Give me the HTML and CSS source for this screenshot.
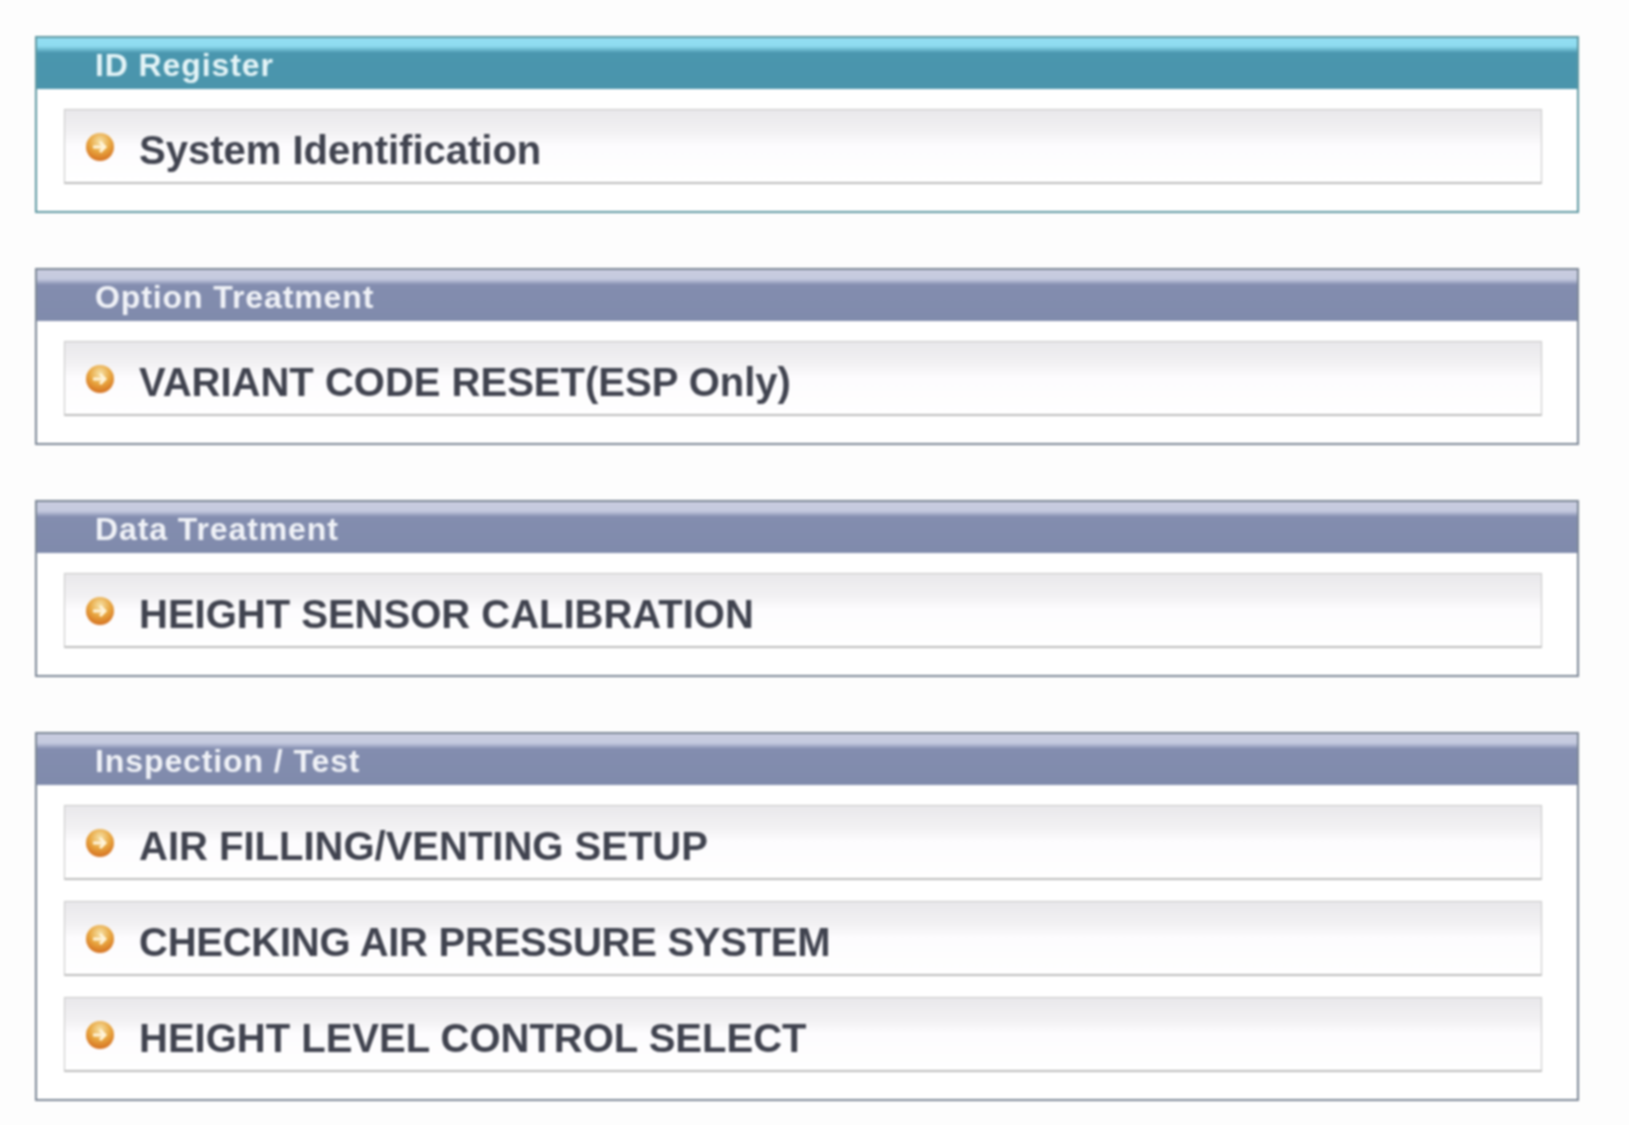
FILE: index.html
```html
<!DOCTYPE html>
<html lang="en">
<head>
  <meta charset="UTF-8" />
  <title>Functions</title>
  <link rel="stylesheet" href="styles.css">
</head>
<body>

  <svg class="defs" width="0" height="0">
    <defs>
      <radialGradient id="ball" cx="50%" cy="30%" r="75%">
        <stop offset="0" stop-color="#f6e2a8" />
        <stop offset="0.5" stop-color="#e8a63f" />
        <stop offset="1" stop-color="#d2681c" />
      </radialGradient>
    </defs>
  </svg>

  <div class="panel panel-teal">
    <div class="panel-title">ID Register</div>
    <div class="panel-body">
      <div class="item">
        <svg class="bullet" viewBox="0 0 30 30"><circle cx="15" cy="15" r="14" fill="url(#ball)" /><path d="M8 15h11M15 10l5 5-5 5" fill="none" stroke="#fff4d8" stroke-width="3" /></svg>
        <span>System Identification</span>
      </div>
    </div>
  </div>

  <div class="panel">
    <div class="panel-title">Option Treatment</div>
    <div class="panel-body">
      <div class="item">
        <svg class="bullet" viewBox="0 0 30 30"><circle cx="15" cy="15" r="14" fill="url(#ball)" /><path d="M8 15h11M15 10l5 5-5 5" fill="none" stroke="#fff4d8" stroke-width="3" /></svg>
        <span>VARIANT CODE RESET(ESP Only)</span>
      </div>
    </div>
  </div>

  <div class="panel">
    <div class="panel-title">Data Treatment</div>
    <div class="panel-body">
      <div class="item">
        <svg class="bullet" viewBox="0 0 30 30"><circle cx="15" cy="15" r="14" fill="url(#ball)" /><path d="M8 15h11M15 10l5 5-5 5" fill="none" stroke="#fff4d8" stroke-width="3" /></svg>
        <span>HEIGHT SENSOR CALIBRATION</span>
      </div>
    </div>
  </div>

  <div class="panel">
    <div class="panel-title">Inspection / Test</div>
    <div class="panel-body">
      <div class="item">
        <svg class="bullet" viewBox="0 0 30 30"><circle cx="15" cy="15" r="14" fill="url(#ball)" /><path d="M8 15h11M15 10l5 5-5 5" fill="none" stroke="#fff4d8" stroke-width="3" /></svg>
        <span>AIR FILLING/VENTING SETUP</span>
      </div>
      <div class="item">
        <svg class="bullet" viewBox="0 0 30 30"><circle cx="15" cy="15" r="14" fill="url(#ball)" /><path d="M8 15h11M15 10l5 5-5 5" fill="none" stroke="#fff4d8" stroke-width="3" /></svg>
        <span class="tight">CHECKING AIR PRESSURE SYSTEM</span>
      </div>
      <div class="item">
        <svg class="bullet" viewBox="0 0 30 30"><circle cx="15" cy="15" r="14" fill="url(#ball)" /><path d="M8 15h11M15 10l5 5-5 5" fill="none" stroke="#fff4d8" stroke-width="3" /></svg>
        <span>HEIGHT LEVEL CONTROL SELECT</span>
      </div>
    </div>
  </div>

</body>
</html>
```

FILE: styles.css
```css
html, body {
  height: 100%;
}

body {
  margin: 0;
  padding: 36px 50px 0 35px;
  box-sizing: border-box;
  display: flex;
  flex-direction: column;
  gap: 55px;
  font-family: "Liberation Sans", Arial, sans-serif;
  background-color: #fdfdfd;
  overflow: hidden;
}

.defs {
  position: absolute;
}

.panel {
  border: 2px solid #7c8796;
  background-color: #fff;
  filter: blur(1px);
}

.panel-title {
  height: 51px;
  box-sizing: border-box;
  padding: 9px 0 0 58px;
  background: linear-gradient(#c9cde0 0, #c5cadf 9px, #838daf 15px, #808bac 100%);
  font-size: 32px;
  line-height: 37px;
  letter-spacing: 0.9px;
  font-weight: bold;
  color: #f0f2f7;
}

.panel-teal {
  border-color: #5f98a2;
}

.panel-teal .panel-title {
  background: linear-gradient(#93def2 0, #8fdcf0 8px, #4a96ae 15px, #4b95ac 100%);
  color: #e4f4f7;
}

.panel-body {
  padding: 20px 35px 27px 27px;
  display: flex;
  flex-direction: column;
  gap: 21px;
}

.item {
  height: 75px;
  box-sizing: border-box;
  padding: 0 0 0 20px;
  display: flex;
  align-items: center;
  gap: 24px;
  border: 1px solid #c6c6c6;
  border-bottom: 2px solid #bdbdbd;
  background: linear-gradient(#e9e8eb 0, #f2f1f3 30%, #fdfcfe 50%, #fff 100%);
  font-size: 40px;
  font-weight: bold;
  color: #40434f;
}

.item span {
  position: relative;
  top: 4px;
}

.item .tight {
  letter-spacing: -0.26px;
}

.bullet {
  width: 30px;
  height: 30px;
  flex: none;
  margin-top: 1px;
}
```
